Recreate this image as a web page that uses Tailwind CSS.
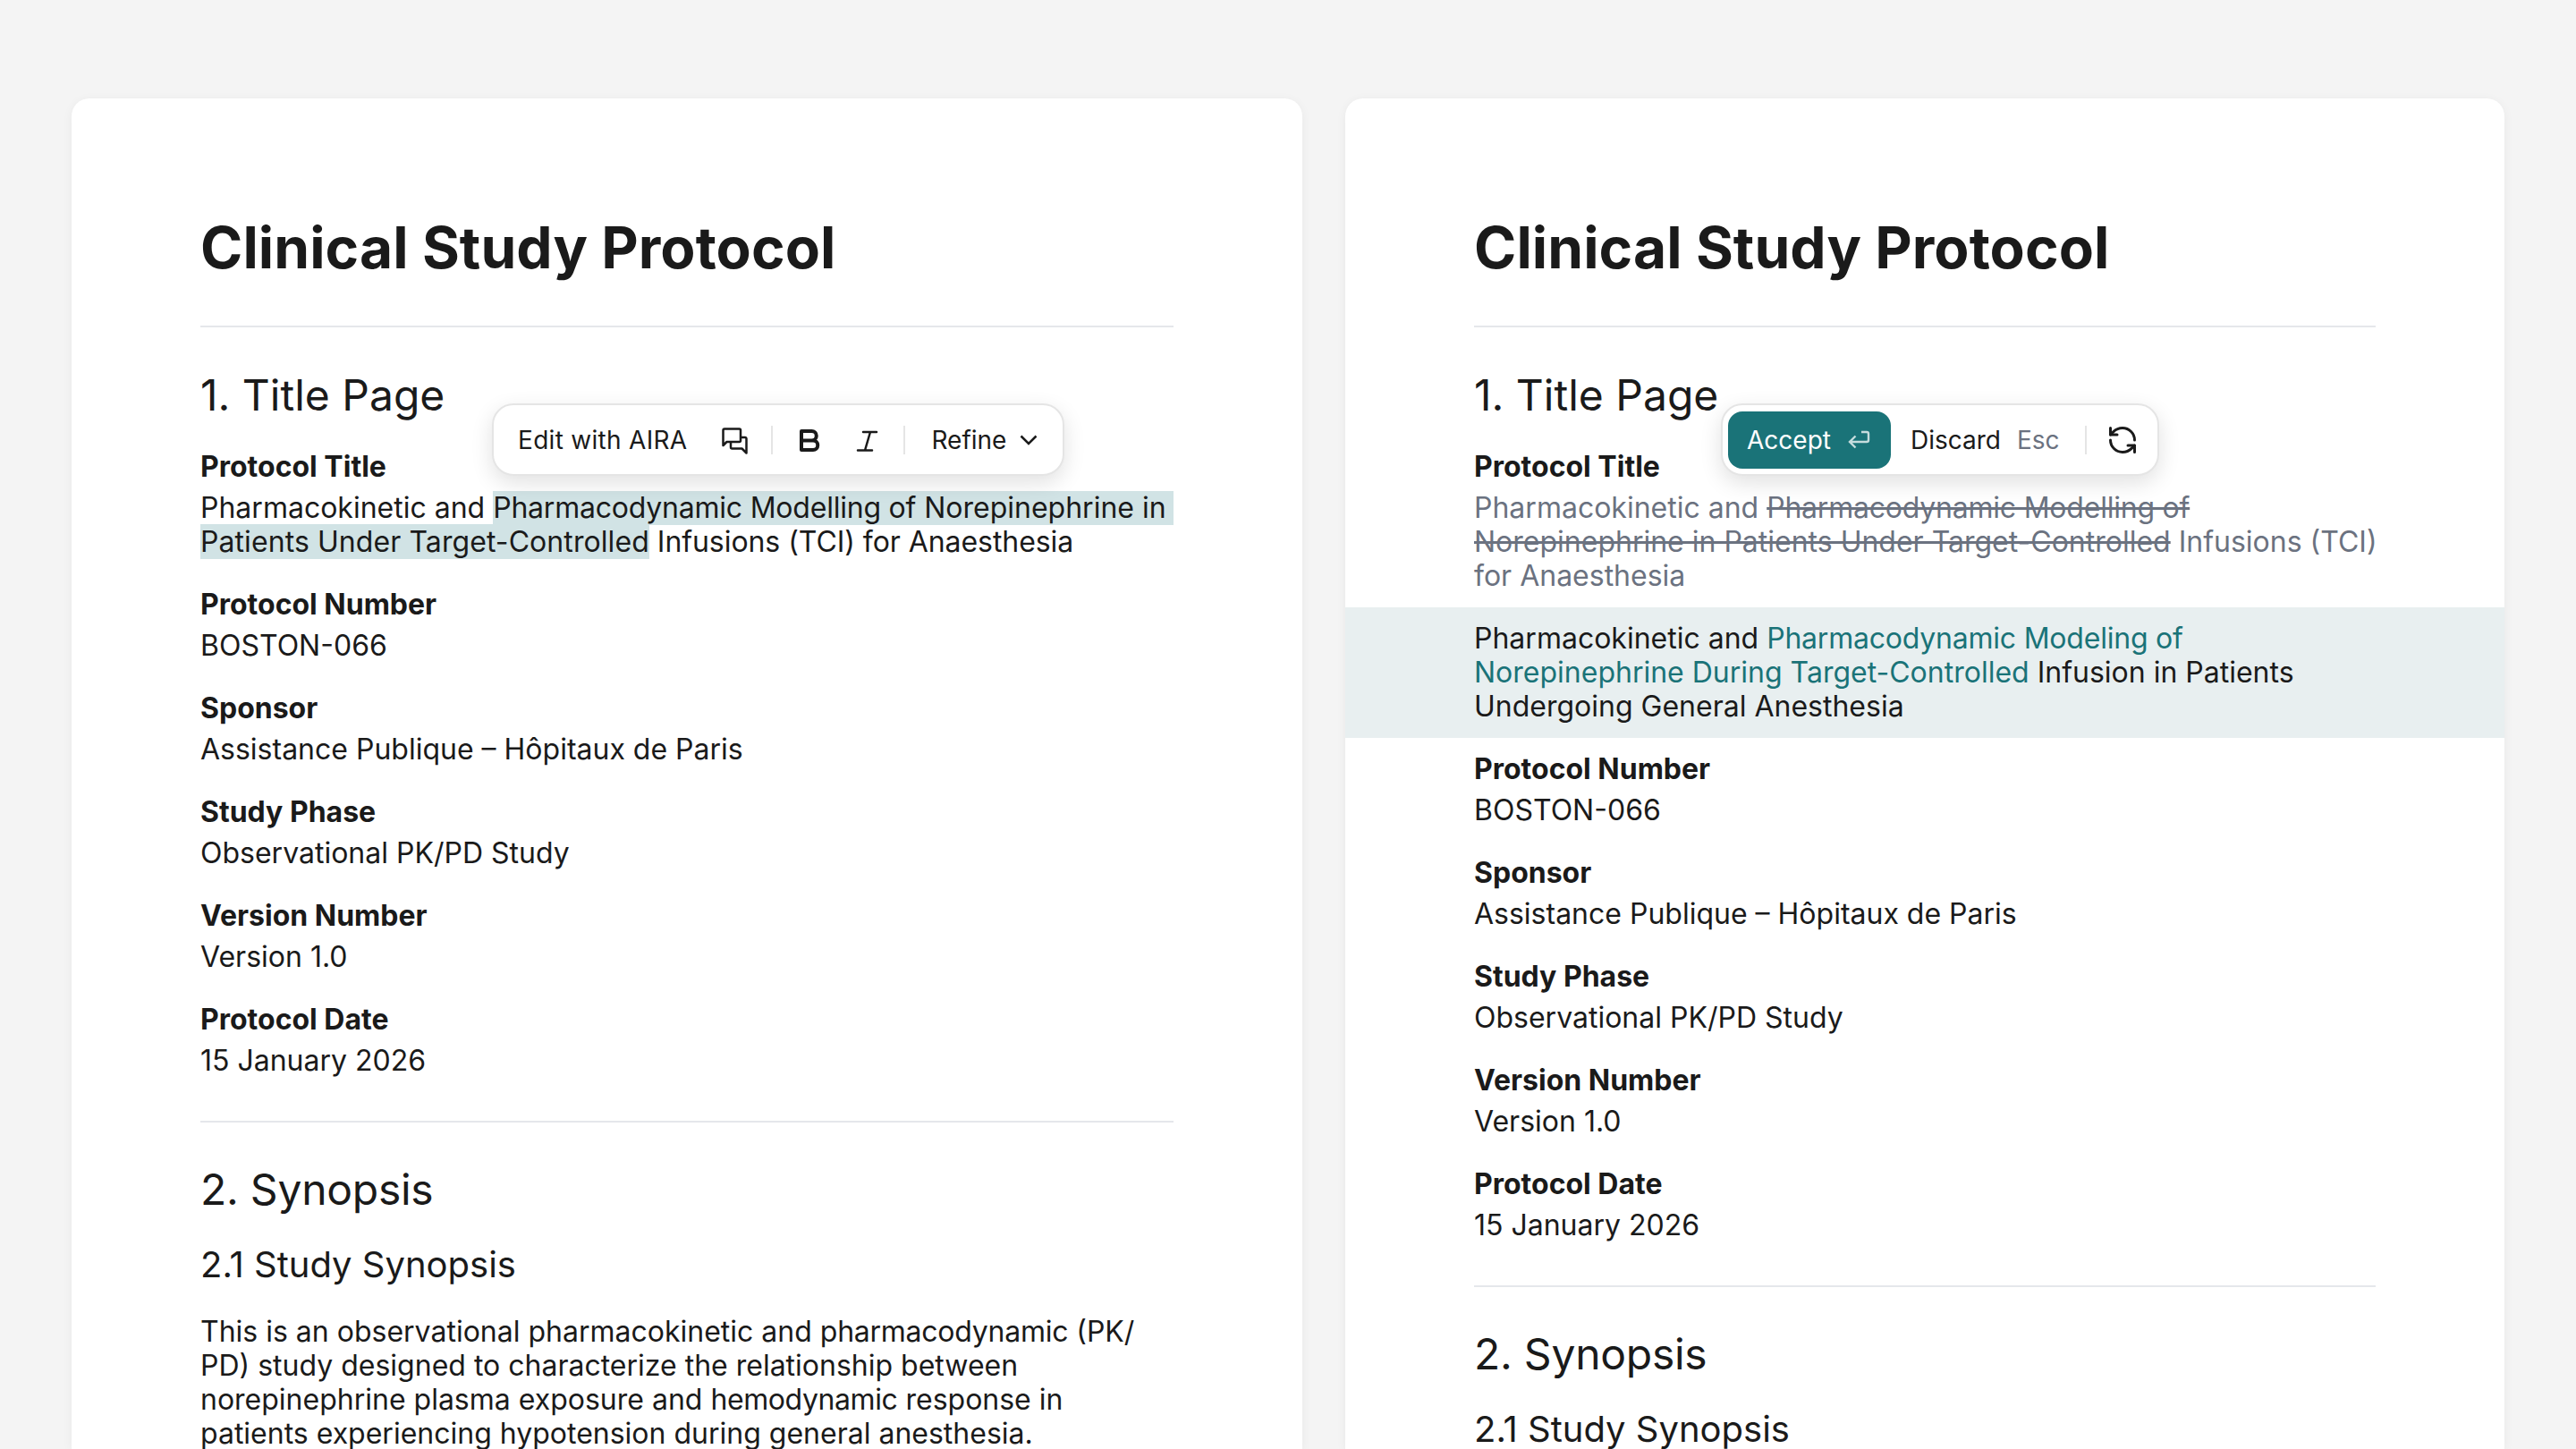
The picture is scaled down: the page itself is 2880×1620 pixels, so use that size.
<!DOCTYPE html>
<html lang="en">
<head>
    <meta charset="UTF-8">
    <title>Clinical Study Protocol</title>
    <script src="https://cdn.jsdelivr.net/npm/@tailwindcss/browser@4"></script>
</head>
<body class="bg-[#f4f4f4] h-[1620px] overflow-hidden font-[Inter,sans-serif] text-[#1a1a1a]">
    <div class="flex gap-12 px-20 pt-[110px]">

        <!-- left card: selection toolbar -->
        <div class="relative w-[1376px] h-[1510px] shrink-0 bg-white rounded-t-[20px] shadow-[0_2px_12px_rgba(0,0,0,0.05)] pt-[127px]">
            <div class="px-36">
                <h1 class="text-[64px] leading-[79px] font-bold tracking-[0.08px]">Clinical Study Protocol</h1>
                <div class="h-[2px] bg-[#e5e7eb] mt-[48px] mb-[47px]"></div>
                <h2 class="text-[48px] leading-[58px] mb-[32px]">1. Title Page</h2>
                <div class="text-[32px] leading-[38px]">
                    <p class="font-bold">Protocol Title</p>
                    <div class="mt-2">
                        <div class="flex"><span class="whitespace-pre">Pharmacokinetic and </span><span class="flex-1 bg-[#d1e3e5]"><span class="tracking-[-0.22px]">Pharmacodynamic Modelling of</span> Norepinephrine in</span></div>
                        <div><span class="bg-[#d1e3e5] tracking-[0.08px]">Patients Under Target-Controlled</span> <span class="tracking-[-0.06px]">Infusions (TCI) for Anaesthesia</span></div>
                    </div>
                    <p class="font-bold mt-8">Protocol Number</p>
                    <p class="mt-2">BOSTON-066</p>
                    <p class="font-bold mt-8">Sponsor</p>
                    <p class="mt-2">Assistance Publique – Hôpitaux de Paris</p>
                    <p class="font-bold mt-8">Study Phase</p>
                    <p class="mt-2">Observational PK/PD Study</p>
                    <p class="font-bold mt-8">Version Number</p>
                    <p class="mt-2">Version 1.0</p>
                    <p class="font-bold mt-8">Protocol Date</p>
                    <p class="mt-2">15 January 2026</p>
                </div>
                <div class="h-[2px] bg-[#e5e7eb] mt-[48px] mb-[46px]"></div>
                <h2 class="text-[48px] leading-[58px] mb-[31px] tracking-[-0.25px]">2. Synopsis</h2>
                <h3 class="text-[40px] leading-[48px] mb-[32px]">2.1 Study Synopsis</h3>
                <p class="text-[32px] leading-[38px]">This is an observational pharmacokinetic and <span class="tracking-[-0.25px]">pharmacodynamic</span> (PK/<wbr>PD) study designed to characterize the relationship between norepinephrine plasma exposure and <span class="tracking-[-0.4px]">hemodynamic</span> response in patients experiencing hypotension during general anesthesia.</p>
            </div>

            <div class="absolute left-[470px] top-[341px] w-[640px] h-[81px] flex items-center bg-white border-2 border-[#e5e5e5] rounded-[24px] shadow-[0_8px_24px_rgba(0,0,0,0.12)] text-[28px] pl-[27px]">
                <span class="tracking-[0.3px]">Edit with AIRA</span>
                <svg class="ml-[37px]" width="32" height="32" viewBox="0 0 32 32" fill="none" stroke="#1a1a1a" stroke-width="2.5" stroke-linejoin="round"><path d="M3.5 22V5A1.5 1.5 0 0 1 5 3.5h16.500A1.5 1.5 0 0 1 23 5v11.500a1.5 1.5 0 0 1-1.5 1.5H7.500z"/><path d="M23 13h5a1.5 1.5 0 0 1 1.5 1.5v16l-5-5H13.500a1.5 1.5 0 0 1-1.5-1.5V18"/></svg>
                <div class="w-[2px] h-8 bg-[#e5e5e5] ml-[25px]"></div>
                <svg class="ml-[26px]" width="32" height="32" viewBox="0 0 32 32" fill="none" stroke="#1a1a1a" stroke-width="4" stroke-linejoin="round"><path d="M6 6h11.500a5.250 5.250 0 0 1 0 10.500H6zM6 16.500h13a5.250 5.250 0 0 1 0 10.500H6z"/></svg>
                <svg class="ml-[33px]" width="28" height="32" viewBox="0 0 28 32" fill="none" stroke="#1a1a1a" stroke-width="2.500" stroke-linecap="round"><path d="M10 7h15M4 27.500h16M18 7l-6 20.500"/></svg>
                <div class="w-[2px] h-8 bg-[#e5e5e5] ml-[27px]"></div>
                <span class="ml-[29px]">Refine</span>
                <svg class="ml-[13px]" width="24" height="24" viewBox="0 0 24 24" fill="none" stroke="#1a1a1a" stroke-width="2.500"><path d="M3.500 7.500l8.500 8.500 8.500-8.500"/></svg>
            </div>
        </div>

        <!-- right card: suggested rewrite -->
        <div class="relative w-[1296px] h-[1510px] shrink-0 bg-white rounded-t-[20px] shadow-[0_2px_12px_rgba(0,0,0,0.05)] pt-[127px]">
            <div class="px-36">
                <h1 class="text-[64px] leading-[79px] font-bold tracking-[0.08px]">Clinical Study Protocol</h1>
                <div class="h-[2px] bg-[#e5e7eb] mt-[48px] mb-[47px]"></div>
                <h2 class="text-[48px] leading-[58px] mb-[32px]">1. Title Page</h2>
                <div class="text-[32px] leading-[38px]">
                    <p class="font-bold">Protocol Title</p>
                    <p class="mt-2 -mr-2 text-[#6b7280]">Pharmacokinetic and <span class="line-through"><span class="tracking-[-0.22px]">Pharmacodynamic Modelling of</span> Norepinephrine in Patients Under Target-Controlled</span> Infusions (TCI)<br>for Anaesthesia</p>
                </div>
            </div>
            <div class="mt-4 px-36 py-4 bg-[#e8eff0] text-[32px] leading-[38px]">
                Pharmacokinetic and <span class="text-[#1a7378]"><span class="tracking-[-0.22px]">Pharmacodynamic Modeling of</span> Norepinephrine During Target-Controlled</span> Infusion in Patients Undergoing General Anesthesia
            </div>
            <div class="px-36 mt-4">
                <div class="text-[32px] leading-[38px]">
                    <p class="font-bold">Protocol Number</p>
                    <p class="mt-2">BOSTON-066</p>
                    <p class="font-bold mt-8">Sponsor</p>
                    <p class="mt-2">Assistance Publique – Hôpitaux de Paris</p>
                    <p class="font-bold mt-8">Study Phase</p>
                    <p class="mt-2">Observational PK/PD Study</p>
                    <p class="font-bold mt-8">Version Number</p>
                    <p class="mt-2">Version 1.0</p>
                    <p class="font-bold mt-8">Protocol Date</p>
                    <p class="mt-2">15 January 2026</p>
                </div>
                <div class="h-[2px] bg-[#e5e7eb] mt-[48px] mb-[46px]"></div>
                <h2 class="text-[48px] leading-[58px] mb-[31px] tracking-[-0.25px]">2. Synopsis</h2>
                <h3 class="text-[40px] leading-[48px]">2.1 Study Synopsis</h3>
            </div>

            <div class="absolute left-[420px] top-[341px] w-[490px] h-[81px] flex items-center bg-white border-2 border-[#e5e5e5] rounded-[24px] shadow-[0_8px_24px_rgba(0,0,0,0.12)] text-[28px] pl-1.5">
                <div class="w-[182px] h-16 flex items-center pl-[21px] bg-[#1a7378] text-white rounded-[16px]">
                    <span>Accept</span>
                    <svg class="ml-[17px]" width="28" height="24" viewBox="0 0 28 24" fill="none" stroke="#ffffff" stroke-opacity="0.75" stroke-width="2.400"><path d="M17 3h6a2 2 0 0 1 2 2v7a2 2 0 0 1-2 2H4M10.500 7.500L4 14l6.500 6.500"/></svg>
                </div>
                <span class="ml-[22px]">Discard</span>
                <span class="ml-[18px] text-[#6b7280]">Esc</span>
                <div class="w-[2px] h-8 bg-[#e5e5e5] ml-[28px]"></div>
                <svg class="ml-[22px]" width="36" height="36" viewBox="0 0 24 24" fill="none" stroke="#1a1a1a" stroke-width="2" stroke-linecap="round" stroke-linejoin="round"><path d="M21 12a9 9 0 0 0-9-9 9.750 9.750 0 0 0-6.740 2.740L3 8"/><path d="M3 3v5h5"/><path d="M3 12a9 9 0 0 0 9 9 9.750 9.750 0 0 0 6.740-2.740L21 16"/><path d="M16 16h5v5"/></svg>
            </div>
        </div>
    </div>
</body>
</html>
